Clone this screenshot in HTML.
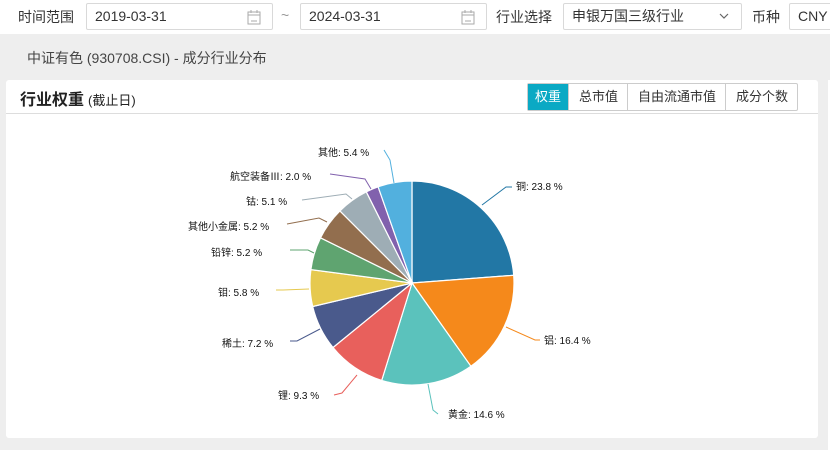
<!DOCTYPE html>
<html><head><meta charset="utf-8"><style>
*{margin:0;padding:0;box-sizing:border-box}
body{width:830px;height:450px;overflow:hidden;background:#eeeeee;font-family:"Liberation Sans","Noto Sans CJK SC",sans-serif;color:#333;position:relative}
.top{position:absolute;left:0;top:0;width:830px;height:34px;background:#fff}
.lbl{position:absolute;top:7px;font-size:14px;color:#333}
.box{position:absolute;top:3px;height:27px;border:1px solid #d9d9d9;border-radius:2px;background:#fff;font-size:14px;line-height:25px;padding-left:8px;color:#333}
.cal{position:absolute;right:11px;top:5px}
.title{position:absolute;left:27px;top:48px;font-size:14px;color:#444}
.card{position:absolute;left:6px;top:80px;width:812px;height:358px;background:#fff;border-radius:3px}
.card2{position:absolute;left:828px;top:80px;width:10px;height:370px;background:#fff}
.hd{position:absolute;left:0;top:0;width:812px;height:34px;border-bottom:1px solid #ddd}
.h1{position:absolute;left:14px;top:6px;font-size:16px;font-weight:bold;color:#222}
.h1 span{font-size:13px;font-weight:normal;margin-left:4px}
.btns{position:absolute;left:521px;top:3px;height:28px;display:flex;border:1px solid #ccc;border-radius:2px}
.btns div{font-size:13px;line-height:26px;padding:0 9px 0 10px;border-left:1px solid #ccc;color:#333}
.btns div:first-child{border-left:none;background:#0aa9c4;color:#fff;padding:0 7px}
text{font-family:"Liberation Sans","Noto Sans CJK SC",sans-serif;font-size:10px;fill:#111}
</style></head><body>
<div class="top">
<div class="lbl" style="left:18px">时间范围</div>
<div class="box" style="left:86px;width:187px">2019-03-31<svg class="cal" width="14" height="16"><rect x="1" y="3" width="12" height="12" fill="none" stroke="#aaa"/><line x1="1" y1="6" x2="13" y2="6" stroke="#aaa"/><line x1="4" y1="1" x2="4" y2="4" stroke="#aaa"/><line x1="10" y1="1" x2="10" y2="4" stroke="#aaa"/><line x1="4" y1="12" x2="10" y2="12" stroke="#aaa"/></svg></div>
<div class="lbl" style="left:281px;color:#999">~</div>
<div class="box" style="left:300px;width:187px">2024-03-31<svg class="cal" width="14" height="16"><rect x="1" y="3" width="12" height="12" fill="none" stroke="#aaa"/><line x1="1" y1="6" x2="13" y2="6" stroke="#aaa"/><line x1="4" y1="1" x2="4" y2="4" stroke="#aaa"/><line x1="10" y1="1" x2="10" y2="4" stroke="#aaa"/><line x1="4" y1="12" x2="10" y2="12" stroke="#aaa"/></svg></div>
<div class="lbl" style="left:496px">行业选择</div>
<div class="box" style="left:563px;width:179px">申银万国三级行业<svg style="position:absolute;right:12px;top:9px" width="10" height="7"><path d="M1 1 L5 5 L9 1" fill="none" stroke="#666" stroke-width="1.2"/></svg></div>
<div class="lbl" style="left:752px">币种</div>
<div class="box" style="left:789px;width:50px">CNY</div>
</div>
<div class="title">中证有色 (930708.CSI) - 成分行业分布</div>
<div class="card">
<div class="hd"><div class="h1">行业权重<span>(截止日)</span></div>
<div class="btns"><div>权重</div><div>总市值</div><div>自由流通市值</div><div>成分个数</div></div></div>
</div>
<div class="card2"></div>
<svg width="830" height="450" style="position:absolute;left:0;top:0">
<g stroke="#fff" stroke-width="1.2">
<path d="M412 283 L412 181 A102 102 0 0 1 513.7 275.3Z" fill="#2277a5"/>
<path d="M412 283 L513.7 275.3 A102 102 0 0 1 470.9 366.3Z" fill="#f5891b"/>
<path d="M412 283 L470.9 366.3 A102 102 0 0 1 381.7 380.4Z" fill="#5bc2bc"/>
<path d="M412 283 L381.7 380.4 A102 102 0 0 1 333 347.5Z" fill="#e8605c"/>
<path d="M412 283 L333 347.5 A102 102 0 0 1 312.7 306.5Z" fill="#4a5a8c"/>
<path d="M412 283 L312.7 306.5 A102 102 0 0 1 310.9 269.6Z" fill="#e6c94f"/>
<path d="M412 283 L310.9 269.6 A102 102 0 0 1 320.5 237.8Z" fill="#5fa470"/>
<path d="M412 283 L320.5 237.8 A102 102 0 0 1 339.9 210.9Z" fill="#926e4e"/>
<path d="M412 283 L339.9 210.9 A102 102 0 0 1 366.3 191.8Z" fill="#9eadb5"/>
<path d="M412 283 L366.3 191.8 A102 102 0 0 1 378.1 186.8Z" fill="#8161ad"/>
<path d="M412 283 L378.1 186.8 A102 102 0 0 1 412 181Z" fill="#52b0de"/>
</g>
<g fill="none" stroke-width="1">
<polyline points="482,205 506,187 512,187" stroke="#2277a5"/>
<polyline points="506,327 535,340 540,340" stroke="#f5891b"/>
<polyline points="428,384 433,410 438,414" stroke="#5bc2bc"/>
<polyline points="357,375 342,393 334,395" stroke="#e8605c"/>
<polyline points="320,329 297,341 290,341" stroke="#4a5a8c"/>
<polyline points="309,289 283,290 276,290" stroke="#e6c94f"/>
<polyline points="314,253 308,250 290,250" stroke="#5fa470"/>
<polyline points="327,222 319,218 287,224" stroke="#926e4e"/>
<polyline points="352,199 346,194 302,200" stroke="#9eadb5"/>
<polyline points="371,189 365,179 330,174" stroke="#8161ad"/>
<polyline points="394,183 390,160 384,150" stroke="#52b0de"/>
</g>
<text x="516" y="190">铜: 23.8 %</text>
<text x="544" y="344">铝: 16.4 %</text>
<text x="448" y="418">黄金: 14.6 %</text>
<text x="278" y="399">锂: 9.3 %</text>
<text x="222" y="347">稀土: 7.2 %</text>
<text x="218" y="296">钼: 5.8 %</text>
<text x="211" y="256">铅锌: 5.2 %</text>
<text x="188" y="230">其他小金属: 5.2 %</text>
<text x="246" y="205">钴: 5.1 %</text>
<text x="230" y="180">航空装备Ⅲ: 2.0 %</text>
<text x="318" y="156">其他: 5.4 %</text>
</svg>
</body></html>
